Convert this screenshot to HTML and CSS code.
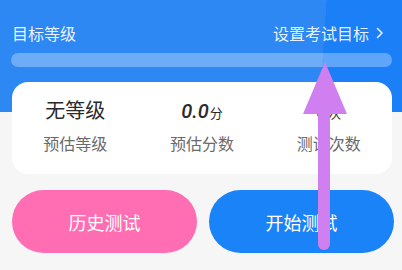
FILE: index.html
```html
<!DOCTYPE html>
<html lang="zh-CN">
<head>
  <meta charset="UTF-8">
  <title>目标等级</title>
  <link rel="stylesheet" href="styles.css">
</head>
<body>
  <div class="header">
    <div class="head-row">
      <span class="title">目标等级</span>
      <a class="set-goal" href="#">设置考试目标
        <svg class="chevron" width="8" height="12" viewBox="0 0 8 12"><path d="M1.5 1.5 L6 6 L1.5 10.5" fill="none" stroke="currentColor" stroke-width="1.6" stroke-linecap="round" stroke-linejoin="round"/></svg>
      </a>
    </div>
    <div class="bar"></div>
  </div>

  <div class="card">
    <div class="stat">
      <div class="value">无等级</div>
      <div class="label">预估等级</div>
    </div>
    <div class="stat">
      <div class="value"><span class="num">0.0</span><span class="unit">分</span></div>
      <div class="label">预估分数</div>
    </div>
    <div class="stat">
      <div class="value"><span class="num">0</span><span class="unit">次</span></div>
      <div class="label">测试次数</div>
    </div>
  </div>

  <div class="actions">
    <button class="btn history">历史测试</button>
    <button class="btn start">开始测试</button>
  </div>

  <svg class="pointer" width="46" height="196" viewBox="0 0 46 196">
    <line x1="22" y1="50" x2="22" y2="186" stroke="#d07ff0" stroke-width="12" stroke-linecap="round"/>
    <polygon points="23,4 1,56 45,56" fill="#d07ff0"/>
  </svg>
</body>
</html>
```

FILE: styles.css
```css
html {
  box-sizing: border-box;
  font-family: "Noto Sans CJK SC", "Noto Sans", sans-serif;
}
*, *::before, *::after {
  box-sizing: inherit;
}

body {
  margin: 0;
  width: 402px;
  height: 270px;
  overflow: hidden;
  position: relative;
  background: #f6f6f6;
}

.header {
  height: 112px;
  padding: 20px 10px 0 11px;
  background: linear-gradient(94deg, #2e88f4 0%, #2e88f4 79.7%, #1b7ff7 79.7%, #1b7ff7 100%);
}
.head-row {
  display: flex;
  justify-content: space-between;
  align-items: center;
  height: 26px;
  padding: 0 8px 0 1px;
}
.title {
  color: rgba(255,255,255,0.92);
  font-size: 16px;
}
.set-goal {
  display: flex;
  align-items: center;
  gap: 7px;
  color: rgba(255,255,255,0.9);
  font-size: 16px;
  text-decoration: none;
}
.chevron {
  display: block;
}
.bar {
  margin-top: 7px;
  height: 14px;
  border-radius: 7px;
  background: rgba(255,255,255,0.3);
}

.card {
  display: grid;
  grid-template-columns: repeat(3, 1fr);
  margin: -30px 10px 0 12px;
  height: 92px;
  padding-top: 13px;
  background: #fff;
  border-radius: 16px;
}
.stat {
  display: flex;
  flex-direction: column;
  align-items: center;
}
.value {
  height: 30px;
  line-height: 30px;
  font-size: 20px;
  color: #2a2a2a;
}
.num {
  font-family: Roboto, "Liberation Sans", sans-serif;
  font-style: italic;
  font-weight: 500;
  font-size: 20px;
}
.unit {
  font-size: 13px;
  margin-left: 1px;
}
.label {
  margin-top: 7px;
  font-size: 16px;
  line-height: 22px;
  color: #6a6a6a;
}

.actions {
  display: grid;
  grid-template-columns: 1fr 1fr;
  gap: 12px;
  margin: 16px 8px 0 12px;
}
.btn {
  height: 63px;
  border: 0;
  border-radius: 32px;
  color: #fff;
  font-family: inherit;
  font-size: 18px;
}
.history {
  background: #ff6db2;
}
.start {
  background: #1a83f8;
}

.pointer {
  position: absolute;
  left: 302px;
  top: 58px;
}
```
